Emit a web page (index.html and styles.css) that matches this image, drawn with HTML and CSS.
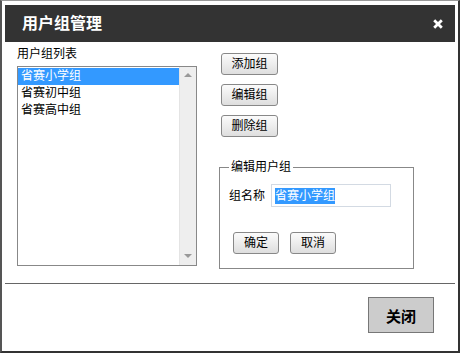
FILE: index.html
```html
<!DOCTYPE html>
<html lang="zh-CN">
  <head>
    <meta charset="UTF-8" />
    <meta name="viewport" content="width=device-width, initial-scale=1.0" />
    <title>用户组管理</title>
    <link rel="stylesheet" href="styles.css">
  </head>
  <body>
    <div class="dialog">
      <div class="title-bar">
        <span class="title">用户组管理</span>
        <svg class="close-x" width="10" height="10" viewBox="0 0 10 10">
          <path d="M1.2 1.2 L8.8 8.8 M8.8 1.2 L1.2 8.8" stroke="#fff" stroke-width="2.8" />
        </svg>
      </div>

      <div class="dialog-body">
        <div class="list-col">
          <div class="label">用户组列表</div>
          <div class="listbox">
            <div class="items">
              <div class="item selected">省赛小学组</div>
              <div class="item">省赛初中组</div>
              <div class="item">省赛高中组</div>
            </div>
            <div class="scrollbar">
              <span class="arrow up"></span>
              <span class="arrow down"></span>
            </div>
          </div>
        </div>

        <div class="side-col">
          <button class="btn btn-side">添加组</button>
          <button class="btn btn-side">编辑组</button>
          <button class="btn btn-side">删除组</button>

          <fieldset class="edit-group">
            <legend>编辑用户组</legend>
            <div class="form-row">
              <label class="row-label">组名称</label>
              <div class="text-input"><span class="sel">省赛小学组</span></div>
            </div>
            <div class="form-actions">
              <button class="btn btn-small">确定</button>
              <button class="btn btn-small">取消</button>
            </div>
          </fieldset>
        </div>
      </div>

      <div class="divider"></div>

      <div class="footer">
        <button class="btn-close">关闭</button>
      </div>
    </div>
  </body>
</html>
```

FILE: styles.css
```css
html,
body {
  margin: 0;
  padding: 0;
  background-color: #fff;
}
body {
  font-family: "Liberation Sans", "Noto Sans CJK SC", sans-serif;
  font-size: 12px;
  color: #000;
}
.dialog {
  width: 460px;
  height: 353px;
  box-sizing: border-box;
  border: 2px solid #333;
  border-top: 1px solid #999;
  border-left-color: #555;
  padding: 4px 3px 0 3px;
  background-color: #fff;
}
.title-bar {
  height: 37px;
  background-color: #333;
  display: flex;
  align-items: center;
  justify-content: space-between;
  padding: 0 12px 0 17px;
}
.title {
  color: #fff;
  font-size: 16px;
  font-weight: bold;
  line-height: 18px;
}
.close-x {
  display: block;
}
.dialog-body {
  display: flex;
  gap: 22px;
  padding: 5px 12px 0;
}
.list-col {
  width: 180px;
}
.label {
  line-height: 14px;
  height: 14px;
  margin-bottom: 5px;
}
.listbox {
  height: 200px;
  box-sizing: border-box;
  border: 1px solid #888;
  display: flex;
}
.items {
  flex: 1;
  padding-top: 1px;
}
.item {
  height: 17px;
  line-height: 17px;
  padding-left: 3px;
}
.item.selected {
  background-color: #3399ff;
  color: #fff;
}
.scrollbar {
  width: 17px;
  background-color: #eee;
  border-left: 1px solid #e4e4e4;
  display: flex;
  flex-direction: column;
  justify-content: space-between;
  align-items: center;
  padding: 6px 0 7px;
  box-sizing: border-box;
}
.arrow {
  width: 0;
  height: 0;
  border-left: 4px solid transparent;
  border-right: 4px solid transparent;
}
.arrow.up {
  border-bottom: 4px solid #999;
}
.arrow.down {
  border-top: 4px solid #999;
}
.side-col {
  padding-top: 6px;
}
.btn {
  font-family: "Liberation Sans", "Noto Sans CJK SC", sans-serif;
  font-size: 12px;
  color: #000;
  height: 22px;
  padding: 0;
  border: 1px solid #888;
  border-radius: 3px;
  background: linear-gradient(#fbfbfb, #ededed 50%, #dedede);
  line-height: 18px;
}
.btn-side {
  display: block;
  width: 57px;
  margin: 0 0 9px 2px;
}
.edit-group {
  width: 195px;
  box-sizing: border-box;
  margin: 23px 0 0;
  padding: 0 9px 14px;
  border: 1px solid #888;
  min-width: 0;
}
.edit-group legend {
  padding: 0 2px;
  line-height: 14px;
}
.form-row {
  display: flex;
  align-items: center;
  gap: 6px;
  margin-top: 10px;
}
.row-label {
  width: 36px;
  line-height: 14px;
}
.text-input {
  width: 120px;
  height: 23px;
  box-sizing: border-box;
  border: 1px solid #d3dae3;
  padding-left: 3px;
  display: flex;
  align-items: center;
}
.sel {
  background-color: #3399ff;
  color: #fff;
  line-height: 16px;
}
.form-actions {
  display: flex;
  gap: 11px;
  margin: 25px 0 0 4px;
}
.btn-small {
  width: 46px;
}
.divider {
  height: 1px;
  background-color: #666;
  margin-top: 14px;
}
.footer {
  display: flex;
  justify-content: flex-end;
  padding: 13px 21px 0;
}
.btn-close {
  width: 66px;
  height: 36px;
  padding: 0;
  background-color: #ccc;
  border: 1px solid #777;
  font-family: "Liberation Sans", "Noto Sans CJK SC", sans-serif;
  font-size: 15px;
  font-weight: bold;
  color: #000;
}
```
